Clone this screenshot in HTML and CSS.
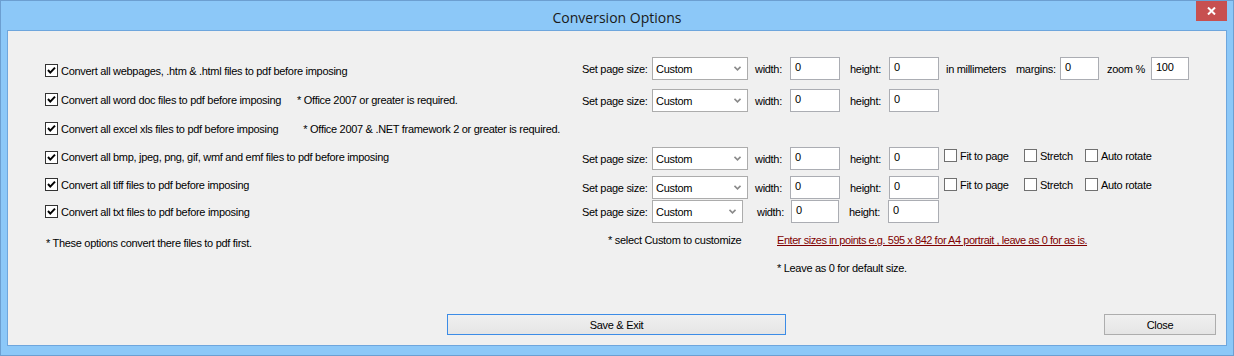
FILE: index.html
```html
<!DOCTYPE html>
<html>
<head>
<meta charset="utf-8">
<link rel="stylesheet" href="styles.css">
</head>
<body>
<div class="window">
  <div class="titlebar">
    <span class="title">Conversion Options</span>
    <div class="close-btn"><svg width="9" height="8" viewBox="0 0 9 8"><path d="M1 0.5 L8 7.5 M8 0.5 L1 7.5" stroke="#fff" stroke-width="2" fill="none"/></svg></div>
  </div>
  <div class="client">
    <div class="main">
      <div class="left">
        <div class="opt h29"><span class="cb"><svg width="11" height="11" viewBox="0 0 11 11"><path d="M2 5 L4.3 7.6 L9 2.6" stroke="#000" stroke-width="2" fill="none"/></svg></span><span>Convert all webpages, .htm &amp; .html files to pdf before imposing</span></div>
        <div class="opt h29"><span class="cb"><svg width="11" height="11" viewBox="0 0 11 11"><path d="M2 5 L4.3 7.6 L9 2.6" stroke="#000" stroke-width="2" fill="none"/></svg></span><span>Convert all word doc files to pdf before imposing</span><span class="note n1">* Office 2007 or greater is required.</span></div>
        <div class="opt h29"><span class="cb"><svg width="11" height="11" viewBox="0 0 11 11"><path d="M2 5 L4.3 7.6 L9 2.6" stroke="#000" stroke-width="2" fill="none"/></svg></span><span>Convert all excel xls files to pdf before imposing</span><span class="note n2">* Office 2007 &amp; .NET framework 2 or greater is required.</span></div>
        <div class="opt h28"><span class="cb"><svg width="11" height="11" viewBox="0 0 11 11"><path d="M2 5 L4.3 7.6 L9 2.6" stroke="#000" stroke-width="2" fill="none"/></svg></span><span>Convert all bmp, jpeg, png, gif, wmf and emf files to pdf before imposing</span></div>
        <div class="opt h27"><span class="cb"><svg width="11" height="11" viewBox="0 0 11 11"><path d="M2 5 L4.3 7.6 L9 2.6" stroke="#000" stroke-width="2" fill="none"/></svg></span><span>Convert all tiff files to pdf before imposing</span></div>
        <div class="opt h27"><span class="cb"><svg width="11" height="11" viewBox="0 0 11 11"><path d="M2 5 L4.3 7.6 L9 2.6" stroke="#000" stroke-width="2" fill="none"/></svg></span><span>Convert all txt files to pdf before imposing</span></div>
        <div class="left-note">* These options convert there files to pdf first.</div>
      </div>
      <div class="right">
        <div class="prow r1">
          <span class="lbl-size">Set page size:</span>
          <div class="select"><span>Custom</span><svg width="7" height="5" viewBox="0 0 7 5"><path d="M0.5 0.8 L3.5 3.8 L6.5 0.8" stroke="#8a8a8a" stroke-width="1.6" fill="none"/></svg></div>
          <span class="lbl-w">width:</span><div class="input w50">0</div>
          <span class="lbl-h">height:</span><div class="input w50">0</div>
          <span class="lbl-mm">in millimeters</span>
          <span class="lbl-m">margins:</span><div class="input w39">0</div>
          <span class="lbl-z">zoom %</span><div class="input w38">100</div>
        </div>
        <div class="prow r2">
          <span class="lbl-size">Set page size:</span>
          <div class="select"><span>Custom</span><svg width="7" height="5" viewBox="0 0 7 5"><path d="M0.5 0.8 L3.5 3.8 L6.5 0.8" stroke="#8a8a8a" stroke-width="1.6" fill="none"/></svg></div>
          <span class="lbl-w">width:</span><div class="input w50">0</div>
          <span class="lbl-h">height:</span><div class="input w50">0</div>
        </div>
        <div class="prow r4">
          <span class="lbl-size">Set page size:</span>
          <div class="select"><span>Custom</span><svg width="7" height="5" viewBox="0 0 7 5"><path d="M0.5 0.8 L3.5 3.8 L6.5 0.8" stroke="#8a8a8a" stroke-width="1.6" fill="none"/></svg></div>
          <span class="lbl-w">width:</span><div class="input w50">0</div>
          <span class="lbl-h">height:</span><div class="input w50">0</div>
          <div class="chk c-fit"><span class="cb un"></span><span>Fit to page</span></div>
          <div class="chk c-str"><span class="cb un"></span><span>Stretch</span></div>
          <div class="chk"><span class="cb un"></span><span>Auto rotate</span></div>
        </div>
        <div class="prow r5">
          <span class="lbl-size">Set page size:</span>
          <div class="select"><span>Custom</span><svg width="7" height="5" viewBox="0 0 7 5"><path d="M0.5 0.8 L3.5 3.8 L6.5 0.8" stroke="#8a8a8a" stroke-width="1.6" fill="none"/></svg></div>
          <span class="lbl-w">width:</span><div class="input w50">0</div>
          <span class="lbl-h">height:</span><div class="input w50">0</div>
          <div class="chk c-fit"><span class="cb un"></span><span>Fit to page</span></div>
          <div class="chk c-str"><span class="cb un"></span><span>Stretch</span></div>
          <div class="chk"><span class="cb un"></span><span>Auto rotate</span></div>
        </div>
        <div class="prow r6">
          <span class="lbl-size">Set page size:</span>
          <div class="select narrow"><span>Custom</span><svg width="7" height="5" viewBox="0 0 7 5"><path d="M0.5 0.8 L3.5 3.8 L6.5 0.8" stroke="#8a8a8a" stroke-width="1.6" fill="none"/></svg></div>
          <span class="lbl-w w6">width:</span><div class="input w48">0</div>
          <span class="lbl-h">height:</span><div class="input w51">0</div>
        </div>
        <div class="frow f1">
          <span class="sel-note">* select Custom to customize</span>
          <span class="red">Enter sizes in points e.g. 595 x 842 for A4 portrait , leave as 0 for as is.</span>
        </div>
        <div class="frow f2">* Leave as 0 for default size.</div>
      </div>
    </div>
    <div class="buttons">
      <div class="btn save">Save &amp; Exit</div>
      <div class="btn close">Close</div>
    </div>
  </div>
</div>
</body>
</html>
```

FILE: styles.css
```css
* { box-sizing: border-box; }

body {
  margin: 0;
  font-family: "Liberation Sans", Arial, sans-serif;
  font-size: 11px;
  letter-spacing: -0.3px;
  color: #000;
}

.window {
  width: 1234px;
  height: 356px;
  background: #8cc8f8;
  border: 1px solid #6c9fd1;
  position: relative;
  display: flex;
  flex-direction: column;
}

.titlebar {
  height: 29px;
  display: flex;
  align-items: center;
  justify-content: center;
}

.title {
  font-family: "Open Sans", "Noto Sans", sans-serif;
  font-size: 14px;
  letter-spacing: 0;
  color: #1a1a1a;
  margin-top: 3px;
}

.close-btn {
  position: absolute;
  top: 0;
  right: 6px;
  width: 31px;
  height: 20px;
  background: #c75050;
  display: flex;
  align-items: center;
  justify-content: center;
}

.client {
  margin: 0 6px;
  height: 316px;
  background: #f0f0f0;
  border: 1px solid #6ea6dd;
  display: flex;
  flex-direction: column;
}

.main {
  display: flex;
  flex: 1;
}

.left {
  width: 574px;
  padding-left: 37px;
  padding-top: 25px;
}

.opt {
  display: flex;
  align-items: center;
  white-space: nowrap;
}
.h29 { height: 29px; }
.h28 { height: 28px; }
.h27 { height: 27px; }

.cb {
  width: 13px;
  height: 13px;
  border: 1px solid #333;
  background: #fff;
  margin-right: 3px;
  display: flex;
  align-items: center;
  justify-content: center;
  flex: none;
}
.cb.un { border-color: #707070; }

.note.n1 { margin-left: 16px; }
.note.n2 { margin-left: 25px; }

.left-note {
  margin-top: 10px;
  height: 16px;
  line-height: 16px;
  padding-left: 1px;
}

.right {
  padding-top: 26px;
  display: flex;
  flex-direction: column;
}

.prow {
  display: flex;
  align-items: center;
  height: 23px;
  white-space: nowrap;
}
.r2 { margin-top: 9px; }
.r4 { margin-top: 35px; }
.r5 { margin-top: 6px; }
.r6 { margin-top: 1px; }

.lbl-size { width: 70px; }

.select {
  width: 96px;
  height: 23px;
  background: #fff;
  border: 1px solid #acacac;
  display: flex;
  align-items: center;
  justify-content: space-between;
  padding: 0 6px 0 3px;
}
.select.narrow { width: 91px; }

.lbl-w { width: 35px; margin-left: 7px; }
.lbl-w.w6 { width: 34px; margin-left: 14px; }
.lbl-h { width: 39px; margin-left: 10px; }
.lbl-mm { width: 70px; margin-left: 7px; }
.lbl-m { width: 44px; }
.lbl-z { width: 44px; margin-left: 8px; }

.input {
  height: 23px;
  background: #fff;
  border: 1px solid #abadb3;
  padding: 2px 0 0 4px;
  align-self: flex-start;
  line-height: 14px;
}
.w50 { width: 50px; }
.w51 { width: 51px; }
.w48 { width: 48px; }
.w39 { width: 39px; }
.w38 { width: 38px; }

.chk {
  display: flex;
  align-items: center;
  align-self: flex-start;
  margin-top: 2px;
}
.c-fit { margin-left: 5px; width: 80px; }
.c-str { width: 61px; }

.frow {
  height: 16px;
  line-height: 16px;
  white-space: nowrap;
}
.f1 { margin-top: 9px; padding-left: 26px; display: flex; }
.f2 { margin-top: 12px; padding-left: 195px; }

.sel-note { width: 169px; }
.red {
  color: #800000;
  text-decoration: underline;
  letter-spacing: -0.45px;
}

.buttons {
  display: flex;
  height: 21px;
  margin-bottom: 10px;
  padding-left: 439px;
  padding-right: 10px;
}

.btn {
  height: 21px;
  display: flex;
  align-items: center;
  justify-content: center;
  background: linear-gradient(#f0f0f0, #e5e5e5);
  border: 1px solid #adadad;
}
.save {
  width: 339px;
  border-color: #3c8ce6;
}
.close {
  width: 112px;
  margin-left: auto;
}
```
